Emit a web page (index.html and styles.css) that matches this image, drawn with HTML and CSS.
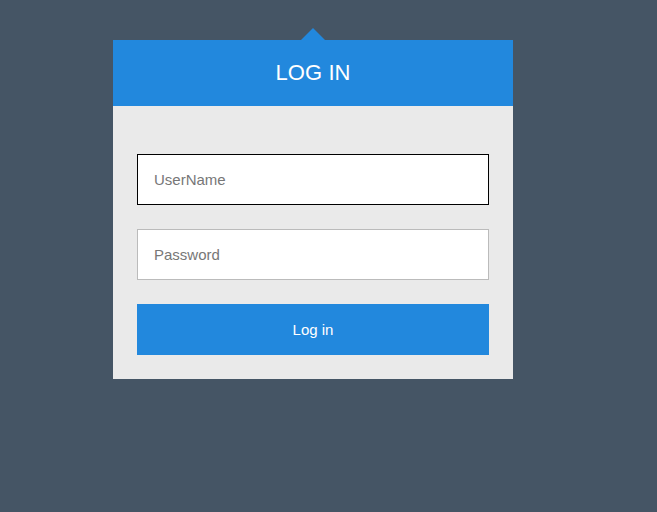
FILE: index.html
```html
<!DOCTYPE html>
<html>
<head>
<meta charset="utf-8">
<link rel="stylesheet" href="styles.css">
</head>
<body>
<div class="login">
  <div class="login-header">
    <h1 class="login-title">LOG IN</h1>
  </div>
  <form class="login-body">
    <input class="field field-focus" type="text" placeholder="UserName">
    <input class="field" type="password" placeholder="Password">
    <button class="btn" type="button">Log in</button>
  </form>
</div>
</body>
</html>
```
FILE: styles.css
```css
html, body {
  margin: 0;
  padding: 0;
  height: 100%;
}
body {
  background: #455565;
  font-family: "Liberation Sans", Arial, sans-serif;
}
.login {
  width: 400px;
  margin-left: 113px;
  padding-top: 40px;
}
.login-header {
  position: relative;
  background: #2288dd;
  height: 66px;
  display: flex;
  align-items: center;
  justify-content: center;
}
.login-header::before {
  content: "";
  position: absolute;
  top: -12px;
  left: 188px;
  border-left: 12px solid transparent;
  border-right: 12px solid transparent;
  border-bottom: 12px solid #2288dd;
}
.login-title {
  margin: 0;
  color: #fff;
  font-weight: normal;
  font-size: 22px;
  letter-spacing: 0.1px;
}
.login-body {
  background: #eaeaea;
  padding: 48px 24px 24px;
  margin: 0;
  display: flex;
  flex-direction: column;
  gap: 24px;
}
.field {
  box-sizing: border-box;
  height: 51px;
  width: 100%;
  margin: 0;
  padding: 0 16px;
  border: 1px solid #bbbbbb;
  background: #fff;
  font-family: "Liberation Sans", Arial, sans-serif;
  font-size: 15px;
  color: #333;
  outline: none;
}
.field::placeholder {
  color: #777;
}
.field-focus {
  border-color: #000;
}
.btn {
  height: 51px;
  width: 100%;
  border: 0;
  margin: 0;
  background: #2288dd;
  color: #fff;
  font-family: "Liberation Sans", Arial, sans-serif;
  font-size: 15px;
  cursor: pointer;
}
```
